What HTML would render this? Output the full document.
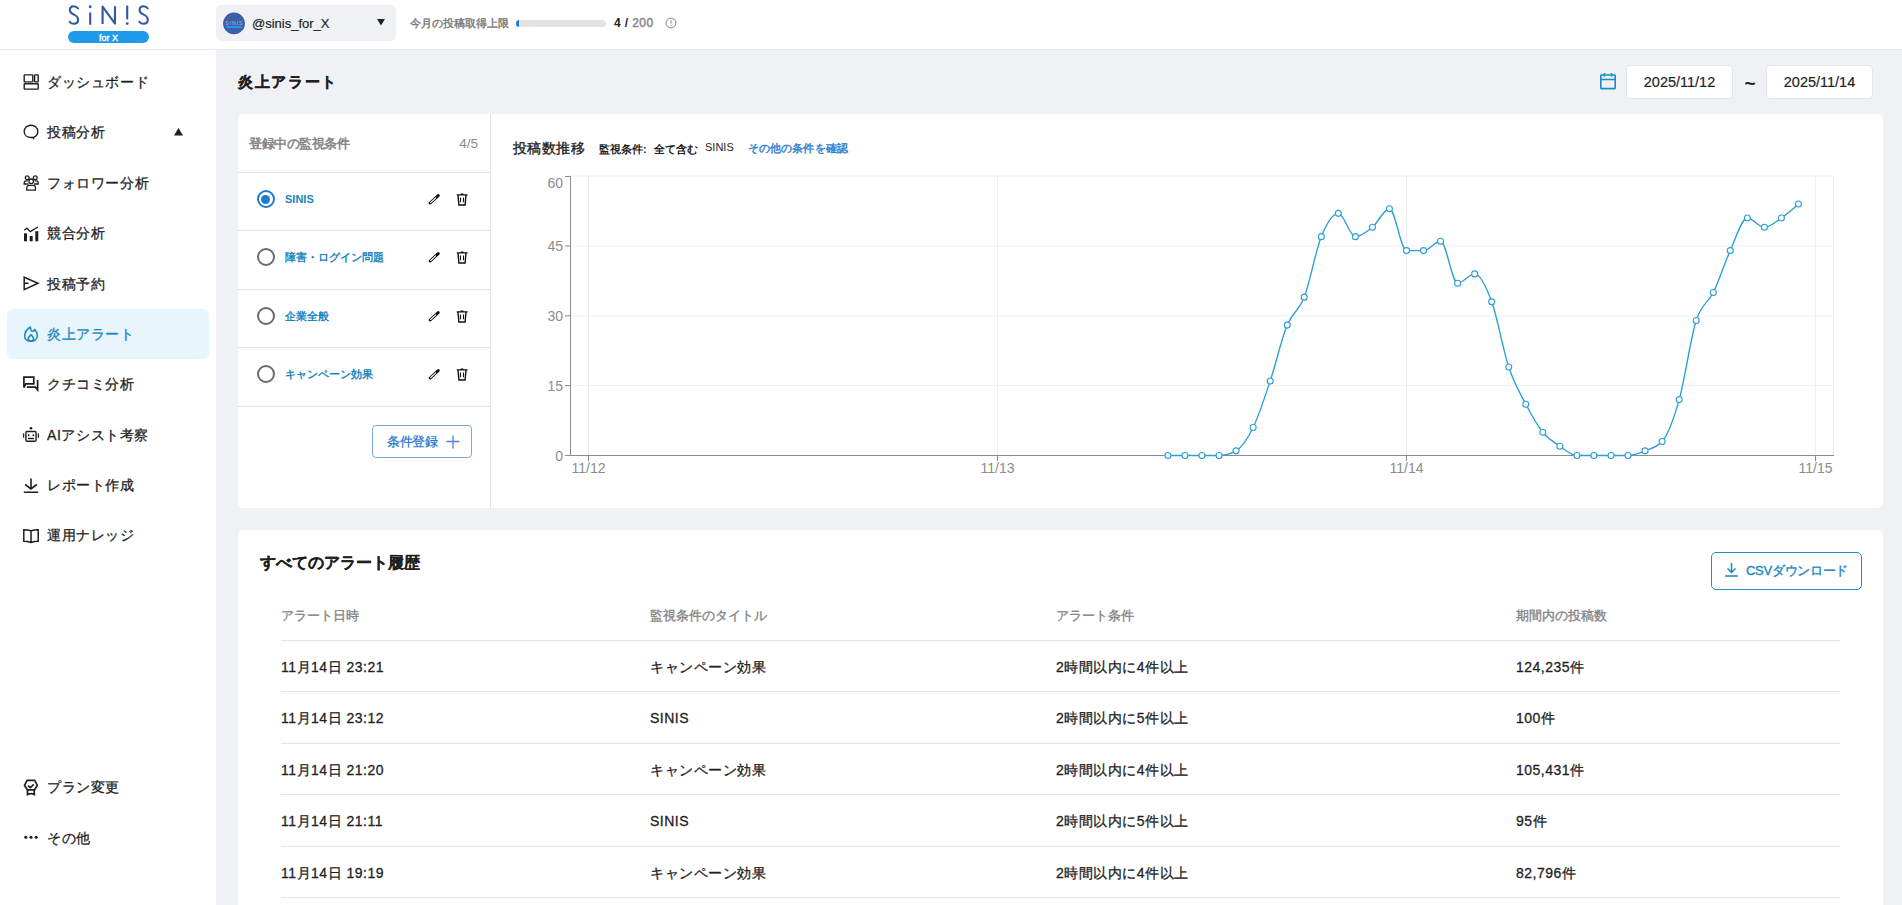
<!DOCTYPE html>
<html lang="ja"><head><meta charset="utf-8">
<style>
*{box-sizing:border-box;margin:0;padding:0}
html,body{width:1902px;height:905px;overflow:hidden}
body{font-family:"Liberation Sans",sans-serif;background:#eff1f5;position:relative;color:#1f1f1f}
.a{position:absolute;white-space:nowrap}
#hdr{left:0;top:0;width:1902px;height:50px;background:#fff;border-bottom:1px solid #e8eaee}
#side{left:0;top:50px;width:216px;height:855px;background:#fff}
.nav{position:absolute;left:7px;width:202px;height:50px;border-radius:6px}
.nav .ic{position:absolute;left:16px;top:17px;width:16px;height:16px;overflow:visible}
.nav .tx{position:absolute;left:40px;top:0;line-height:50px;font-size:14px;letter-spacing:0.6px;color:#1f1f1f;white-space:nowrap;-webkit-text-stroke:0.3px #1f1f1f}
.nav.on{background:#e8f5fc}
.nav.on .tx{color:#1a87c0;-webkit-text-stroke:0.3px #1a87c0}
svg{display:block}
.card{position:absolute;background:#fff;border-radius:5px}
.row{position:absolute;left:0;width:252px;height:58px;border-top:1px solid #e2e4e8}
.med{-webkit-text-stroke:0.3px currentColor}
</style></head><body>
<div id="hdr" class="a">
  <svg class="a" style="left:60px;top:2px" width="100" height="44" viewBox="0 0 100 44">
    <g fill="none" stroke="#2f5aa3" stroke-width="2.1" stroke-linecap="round" stroke-linejoin="round">
      <path id="s1" d="M18,6.4C16.9,4.9 15.4,4.3 13.9,4.3C11.4,4.3 9.9,6 9.9,8.2C9.9,10.6 11.8,11.6 14,12.6C16.6,13.8 18.1,15.2 18.1,17.8C18.1,20.3 16.3,21.8 13.8,21.8C12,21.8 10.7,21.1 9.7,19.8"/>
      <path d="M30.2,11.2V22"/>
      <path d="M42.6,22V4.6L55,21.6V4.3" stroke-linecap="butt"/>
      <path d="M67.2,4.6V16.6"/>
      <path transform="translate(69.7,0)" d="M18,6.4C16.9,4.9 15.4,4.3 13.9,4.3C11.4,4.3 9.9,6 9.9,8.2C9.9,10.6 11.8,11.6 14,12.6C16.6,13.8 18.1,15.2 18.1,17.8C18.1,20.3 16.3,21.8 13.8,21.8C12,21.8 10.7,21.1 9.7,19.8"/>
    </g>
    <circle cx="30.2" cy="4.8" r="1.45" fill="#2f5aa3"/>
    <circle cx="67.2" cy="21.6" r="1.45" fill="#2f5aa3"/>
    <rect x="8" y="29" width="81" height="12" rx="6" fill="#1e9bea"/>
    <text x="48.5" y="38.6" text-anchor="middle" font-family="Liberation Sans" font-size="9" fill="#fff" stroke="#fff" stroke-width="0.35">for X</text>
  </svg>
  <div class="a" style="left:216px;top:5px;width:180px;height:36px;background:#eff1f5;border-radius:5px">
    <svg class="a" style="left:6px;top:7px" width="24" height="24" viewBox="0 0 24 24"><circle cx="12" cy="11.4" r="10.9" fill="#3d5fa8"/><text x="12.4" y="12.6" text-anchor="middle" font-family="Liberation Sans" font-size="5.2" fill="#a9bde6" letter-spacing="0.9">SINIS</text><rect x="4" y="13.9" width="16" height="2" rx="1" fill="#1e9bea"/></svg>
    <div class="a" style="left:36px;top:0;line-height:37px;font-size:13px;color:#1f1f1f;-webkit-text-stroke:0.2px #1f1f1f">@sinis_for_X</div>
    <svg class="a" style="left:161px;top:14px" width="8" height="7" viewBox="0 0 8 7"><path d="M0,0H8L4,6.5Z" fill="#222"/></svg>
  </div>
  <div class="a" style="left:410px;top:0;line-height:47px;font-size:11px;color:#7a7a7a;-webkit-text-stroke:0.4px #7a7a7a">今月の投稿取得上限</div>
  <div class="a" style="left:516px;top:20px;width:90px;height:7px;border-radius:4px;background:#e3e3e3;overflow:hidden"><div style="width:2.5px;height:7px;background:#1f7ad3"></div></div>
  <div class="a" style="left:614px;top:0;line-height:46px;font-size:12px;font-weight:bold;letter-spacing:0.4px;color:#222">4 / <span style="color:#8a8a8a;font-weight:normal;-webkit-text-stroke:0.5px #8a8a8a">200</span></div>
  <svg class="a" style="left:665px;top:17px" width="12" height="12" viewBox="0 0 12 12"><circle cx="6" cy="6" r="4.9" fill="none" stroke="#777" stroke-width="0.9"/><path d="M6,3.3V6.6" stroke="#777" stroke-width="0.9"/><circle cx="6" cy="8.4" r="0.5" fill="#777"/></svg>
</div>

<div id="side" class="a">
<div class="nav" style="top:7px"><svg class="ic" viewBox="0 0 16 16"><g fill="none" stroke="#1f1f1f" stroke-width="1.4"><rect x="1.2" y="0.9" width="8.6" height="7" rx="0.6"/><rect x="11.6" y="0.9" width="3.6" height="7" rx="0.6"/><rect x="1.2" y="9.8" width="14" height="5.3" rx="0.6"/></g></svg><div class="tx">ダッシュボード</div></div>
<div class="nav" style="top:57px"><svg class="ic" viewBox="0 0 16 16"><g fill="none" stroke="#1f1f1f" stroke-width="1.4"><path d="M10,13.2C9,13.4 8.6,13.5 8,13.5C4,13.5 1.2,11 1.2,7.5C1.2,4 4.2,1.3 8,1.3C11.8,1.3 14.8,4 14.8,7.5C14.8,10 13.3,12.2 10.8,13.4L10.3,15.2"/></g></svg><div class="tx">投稿分析</div><svg class="a" style="left:167px;top:21px" width="9" height="8" viewBox="0 0 9 8"><path d="M0,7.5H9L4.5,0Z" fill="#1f1f1f"/></svg></div>
<div class="nav" style="top:108px"><svg class="ic" viewBox="0 0 16 16"><g fill="none" stroke="#1f1f1f" stroke-width="1.3"><circle cx="4.2" cy="2.8" r="1.9"/><circle cx="12.2" cy="2.8" r="1.9"/><circle cx="8.2" cy="6.3" r="2.3"/><path d="M5.5,9H1.2V7.8C1.2,6.5 2,5.8 3.2,5.8H4.8M11,9H15.2V7.8C15.2,6.5 14.4,5.8 13.2,5.8H11.6M3.8,15.2H12.4V12.5C12.4,11.4 11.6,10.4 10.4,10.4H6C4.8,10.4 3.8,11.4 3.8,12.5Z"/></g></svg><div class="tx">フォロワー分析</div></div>
<div class="nav" style="top:158px"><svg class="ic" viewBox="0 0 16 16"><g fill="#1f1f1f"><rect x="1" y="8.3" width="3" height="8"/><rect x="6.7" y="11" width="3" height="5.3"/><rect x="12.3" y="6.2" width="3" height="10.1"/></g><path d="M1.3,5.2L4,3.2L7.3,6.6L15,2" fill="none" stroke="#1f1f1f" stroke-width="1.3"/></svg><div class="tx">競合分析</div></div>
<div class="nav" style="top:209px"><svg class="ic" viewBox="0 0 16 16"><path d="M1.2,1.2L15,7.3L1.2,13.6Z M1.2,7.3H5.5" fill="none" stroke="#1f1f1f" stroke-width="1.5" stroke-linejoin="miter"/></svg><div class="tx">投稿予約</div></div>
<div class="nav on" style="top:259px"><svg class="ic" viewBox="0 0 16 16"><path d="M7.4,1C4.2,3 1.7,6.3 1.7,10C1.7,13.3 4.5,15.3 8,15.3C11.5,15.3 14.3,13.2 14.3,9.8C14.3,7.2 13.2,5 11.6,3.4C11.3,4.6 10.6,5.3 9.6,5.3C8.3,5.3 7.6,4.2 7.4,1Z M8,8.7L5.9,11C5.5,11.5 5.3,12 5.3,12.6C5.3,14 6.5,15 8,15C9.5,15 10.6,14 10.6,12.6C10.6,12 10.4,11.5 10,11Z" fill="none" stroke="#1a87c0" stroke-width="1.6" stroke-linejoin="round"/></svg><div class="tx">炎上アラート</div></div>
<div class="nav" style="top:309px"><svg class="ic" viewBox="0 0 16 16"><g fill="none" stroke="#1f1f1f" stroke-width="1.7"><path d="M0.9,11.5V1.1H10.8V7.8H2.8Z"/><path d="M3.8,11.1H12.4L14.6,13.8V4.1"/></g></svg><div class="tx">クチコミ分析</div></div>
<div class="nav" style="top:360px"><svg class="ic" viewBox="0 0 16 16"><g fill="none" stroke="#1f1f1f" stroke-width="1.4" stroke-linecap="round"><rect x="2.9" y="4.5" width="10.2" height="9.7" rx="1.2"/><path d="M0.6,6.8V10.2M15.4,6.8V10.2" stroke-width="1.3"/><path d="M5.5,11.5H10.5"/></g><g fill="#1f1f1f"><circle cx="8" cy="1.3" r="1.3"/><circle cx="5.6" cy="8.3" r="0.95"/><circle cx="10.4" cy="8.3" r="0.95"/></g></svg><div class="tx">AIアシスト考察</div></div>
<div class="nav" style="top:410px"><svg class="ic" viewBox="0 0 16 16"><g fill="none" stroke="#1f1f1f" stroke-width="1.6"><path d="M8,1.5V12M2.2,7.5L8,12L13.8,7.5M0.8,15.3H15.2"/></g></svg><div class="tx">レポート作成</div></div>
<div class="nav" style="top:460px"><svg class="ic" viewBox="0 0 16 16"><g fill="none" stroke="#1f1f1f" stroke-width="1.5"><path d="M0.8,2.8Q4.5,2.8 8,3.8Q11.5,2.8 15.2,2.8V14.2Q11.5,14.2 8,15.5Q4.5,14.2 0.8,14.2Z M8,3.8V15.5"/></g></svg><div class="tx">運用ナレッジ</div></div>
<div class="nav" style="top:712px"><svg class="ic" viewBox="0 0 16 16"><g fill="none" stroke="#1f1f1f" stroke-width="1.7"><path d="M4.1,1.3H11.7L14.3,6.4L11.5,10.8H4.4L1.5,6.4Z"/><path d="M4.5,10.8V15.6Q8,13.8 11.3,15.6V10.8"/><path d="M5,6.6L7.3,8.7L10.8,5.3"/></g></svg><div class="tx">プラン変更</div></div>
<div class="nav" style="top:763px"><svg class="ic" viewBox="0 0 16 16"><g fill="#1f1f1f"><circle cx="2.8" cy="7.2" r="1.55"/><circle cx="8" cy="7.2" r="1.55"/><circle cx="13.2" cy="7.2" r="1.55"/></g></svg><div class="tx">その他</div></div>

</div>

<div class="a" style="left:238px;top:0;line-height:164px;font-size:15px;font-weight:bold;letter-spacing:1.7px;color:#1f1f1f;-webkit-text-stroke:0.3px #1f1f1f">炎上アラート</div>
<svg class="a" style="left:1599px;top:72px" width="18" height="18" viewBox="0 0 18 18"><g fill="none" stroke="#1a8fc9" stroke-width="1.6"><rect x="1.8" y="3" width="14.4" height="13.6" rx="0.5"/><path d="M1.8,7.5H16.2M5.5,1V4.5M12.5,1V4.5"/></g></svg>
<div class="a" style="left:1626px;top:65px;width:107px;height:34px;background:#fff;border:1px solid #e3e5e9;border-radius:4px;text-align:center;line-height:32.5px;font-size:14.5px;color:#1f1f1f;-webkit-text-stroke:0.2px #1f1f1f">2025/11/12</div>
<div class="a" style="left:1742px;top:68px;width:16px;line-height:32px;font-size:19px;font-weight:bold;text-align:center;color:#1f1f1f">~</div>
<div class="a" style="left:1766px;top:65px;width:107px;height:34px;background:#fff;border:1px solid #e3e5e9;border-radius:4px;text-align:center;line-height:32.5px;font-size:14.5px;color:#1f1f1f;-webkit-text-stroke:0.2px #1f1f1f">2025/11/14</div>

<div class="card" style="left:238px;top:114px;width:1645px;height:394px">
  <div class="a" style="left:252px;top:0;width:1px;height:394px;background:#e2e4e8"></div>
  <div class="a" style="left:11px;top:0;line-height:60px;font-size:13px;letter-spacing:-0.45px;color:#858585;-webkit-text-stroke:0.55px #858585">登録中の監視条件</div>
  <div class="a" style="right:1405px;top:0;line-height:59px;font-size:13.5px;color:#8a8a8a">4/5</div>
  <div class="row" style="top:58.0px"><div class="a" style="left:18.5px;top:17px;width:18px;height:18px;border-radius:50%;border:2px solid #1f78d1"><div class="a" style="left:2.5px;top:2.5px;width:9px;height:9px;border-radius:50%;background:#1f78d1"></div></div><div class="a" style="left:47px;top:0;line-height:53px;font-size:11px;font-weight:bold;color:#1a87c0">SINIS</div><svg class="a" style="left:189px;top:18px" width="14" height="14" viewBox="0 0 14 14"><path d="M3.2,12L11.2,4.6" stroke="#111" stroke-width="3" stroke-linecap="round"/><path d="M3.7,11.5L8.7,6.9" stroke="#fff" stroke-width="1.1" stroke-linecap="round"/></svg><svg class="a" style="left:217px;top:19px" width="14" height="14" viewBox="0 0 14 14"><g fill="none" stroke="#111" stroke-width="1.4"><path d="M1.8,2.9H12.6M5.6,2.1H8.4M3,3.1L3.9,13H10.1L11,3.1"/><path d="M5.5,5.5V10.3M8.5,5.5V10.3" stroke-width="1.1"/></g></svg></div><div class="row" style="top:116.0px"><div class="a" style="left:18.5px;top:17px;width:18px;height:18px;border-radius:50%;border:2px solid #6b6b6b"></div><div class="a" style="left:47px;top:0;line-height:53px;font-size:11px;font-weight:bold;color:#1a87c0">障害・ログイン問題</div><svg class="a" style="left:189px;top:18px" width="14" height="14" viewBox="0 0 14 14"><path d="M3.2,12L11.2,4.6" stroke="#111" stroke-width="3" stroke-linecap="round"/><path d="M3.7,11.5L8.7,6.9" stroke="#fff" stroke-width="1.1" stroke-linecap="round"/></svg><svg class="a" style="left:217px;top:19px" width="14" height="14" viewBox="0 0 14 14"><g fill="none" stroke="#111" stroke-width="1.4"><path d="M1.8,2.9H12.6M5.6,2.1H8.4M3,3.1L3.9,13H10.1L11,3.1"/><path d="M5.5,5.5V10.3M8.5,5.5V10.3" stroke-width="1.1"/></g></svg></div><div class="row" style="top:175.0px"><div class="a" style="left:18.5px;top:17px;width:18px;height:18px;border-radius:50%;border:2px solid #6b6b6b"></div><div class="a" style="left:47px;top:0;line-height:53px;font-size:11px;font-weight:bold;color:#1a87c0">企業全般</div><svg class="a" style="left:189px;top:18px" width="14" height="14" viewBox="0 0 14 14"><path d="M3.2,12L11.2,4.6" stroke="#111" stroke-width="3" stroke-linecap="round"/><path d="M3.7,11.5L8.7,6.9" stroke="#fff" stroke-width="1.1" stroke-linecap="round"/></svg><svg class="a" style="left:217px;top:19px" width="14" height="14" viewBox="0 0 14 14"><g fill="none" stroke="#111" stroke-width="1.4"><path d="M1.8,2.9H12.6M5.6,2.1H8.4M3,3.1L3.9,13H10.1L11,3.1"/><path d="M5.5,5.5V10.3M8.5,5.5V10.3" stroke-width="1.1"/></g></svg></div><div class="row" style="top:233.0px"><div class="a" style="left:18.5px;top:17px;width:18px;height:18px;border-radius:50%;border:2px solid #6b6b6b"></div><div class="a" style="left:47px;top:0;line-height:53px;font-size:11px;font-weight:bold;color:#1a87c0">キャンペーン効果</div><svg class="a" style="left:189px;top:18px" width="14" height="14" viewBox="0 0 14 14"><path d="M3.2,12L11.2,4.6" stroke="#111" stroke-width="3" stroke-linecap="round"/><path d="M3.7,11.5L8.7,6.9" stroke="#fff" stroke-width="1.1" stroke-linecap="round"/></svg><svg class="a" style="left:217px;top:19px" width="14" height="14" viewBox="0 0 14 14"><g fill="none" stroke="#111" stroke-width="1.4"><path d="M1.8,2.9H12.6M5.6,2.1H8.4M3,3.1L3.9,13H10.1L11,3.1"/><path d="M5.5,5.5V10.3M8.5,5.5V10.3" stroke-width="1.1"/></g></svg></div><div class="row" style="top:292px"></div>
  <div class="a" style="left:134px;top:311px;width:100px;height:33px;border:1px solid #74aaea;border-radius:4px;color:#2f78d2;font-size:13px;letter-spacing:-0.5px;line-height:32px;padding-left:14px;-webkit-text-stroke:0.3px #2f78d2">条件登録<svg class="a" style="left:73px;top:9px" width="14" height="14" viewBox="0 0 14 14"><path d="M7,0.5V13.5M0.5,6.5H13.5" stroke="#4f83d4" stroke-width="1.3"/></svg></div>

  <div class="a" style="left:275px;top:0;line-height:68px;font-size:14px;letter-spacing:0.4px;color:#1f1f1f;-webkit-text-stroke:0.35px #1f1f1f">投稿数推移</div>
  <div class="a" style="left:361px;top:0;line-height:71px;font-size:11px;font-weight:bold;color:#1f1f1f">監視条件:</div>
  <div class="a" style="left:416px;top:0;line-height:71px;font-size:11px;font-weight:bold;color:#1f1f1f">全て含む</div>
  <div class="a" style="left:467px;top:0;line-height:66px;font-size:11px;color:#1f1f1f">SINIS</div>
  <div class="a" style="left:510px;top:0;line-height:69px;font-size:11px;letter-spacing:0.1px;color:#2f7fd0;-webkit-text-stroke:0.45px #2f7fd0">その他の条件を確認</div>
</div>

<svg class="a" style="left:0;top:0" width="1902" height="905" viewBox="0 0 1902 905">
  <g stroke-width="1">
    <path stroke="#eef1f2" d="M570,176.1H1834M570,246H1834M570,315.8H1834M570,385.6H1834"/>
    <path stroke="#eceff1" d="M588.5,176V455M997.5,176V455M1406.5,176V455M1815.5,176V455M1833.5,176V455"/>
  </g>
  <g stroke="#8c8c8c" stroke-width="1">
    <path d="M570.5,176V456M565,176.5H570.5M565,246H570.5M565,315.8H570.5M565,385.6H570.5M565,455.5H570.5"/>
    <path d="M570,455.5H1834M588.5,455.5V461M997.5,455.5V461M1406.5,455.5V461M1815.5,455.5V461"/>
  </g>
  <g font-family="Liberation Sans" font-size="14" fill="#8c8c8c" text-anchor="end">
    <text x="563" y="188">60</text><text x="563" y="251">45</text><text x="563" y="321">30</text><text x="563" y="391">15</text><text x="563" y="461">0</text>
  </g>
  <g font-family="Liberation Sans" font-size="14" fill="#8c8c8c" text-anchor="middle">
    <text x="588.5" y="473">11/12</text><text x="997.5" y="473">11/13</text><text x="1406.5" y="473">11/14</text><text x="1815.5" y="473">11/15</text>
  </g>
  <path d="M1167.92,455.50C1173.60,455.50,1179.28,455.50,1184.96,455.50C1190.64,455.50,1196.32,455.50,1202.00,455.50C1207.68,455.50,1213.36,455.50,1219.04,455.50C1224.72,455.50,1230.40,453.95,1236.08,450.84C1241.76,447.74,1247.44,439.20,1253.12,427.56C1258.81,415.92,1264.49,398.07,1270.17,380.99C1275.85,363.92,1281.53,339.08,1287.21,325.11C1292.89,311.14,1298.57,311.92,1304.25,297.17C1309.93,282.43,1315.61,250.61,1321.29,236.64C1326.97,222.67,1332.65,213.35,1338.33,213.35C1344.01,213.35,1349.69,236.64,1355.38,236.64C1361.06,236.64,1366.74,231.98,1372.42,227.32C1378.10,222.67,1383.78,208.70,1389.46,208.70C1395.14,208.70,1400.82,250.61,1406.50,250.61C1412.18,250.61,1417.86,250.61,1423.54,250.61C1429.22,250.61,1434.90,241.29,1440.58,241.29C1446.26,241.29,1451.94,283.20,1457.62,283.20C1463.31,283.20,1468.99,273.89,1474.67,273.89C1480.35,273.89,1486.03,286.31,1491.71,301.83C1497.39,317.35,1503.07,349.95,1508.75,367.02C1514.43,384.10,1520.11,393.41,1525.79,404.28C1531.47,415.14,1537.15,425.23,1542.83,432.22C1548.51,439.20,1554.19,442.31,1559.88,446.19C1565.56,450.07,1571.24,455.50,1576.92,455.50C1582.60,455.50,1588.28,455.50,1593.96,455.50C1599.64,455.50,1605.32,455.50,1611.00,455.50C1616.68,455.50,1622.36,455.50,1628.04,455.50C1633.72,455.50,1639.40,453.17,1645.08,450.84C1650.76,448.52,1656.44,447.74,1662.12,441.53C1667.81,435.32,1673.49,419.80,1679.17,399.62C1684.85,379.44,1690.53,338.31,1696.21,320.46C1701.89,302.61,1707.57,304.16,1713.25,292.52C1718.93,280.87,1724.61,263.02,1730.29,250.61C1735.97,238.19,1741.65,218.01,1747.33,218.01C1753.01,218.01,1758.69,227.32,1764.38,227.32C1770.06,227.32,1775.74,221.89,1781.42,218.01C1787.10,214.13,1792.78,209.08,1798.46,204.04" fill="none" stroke="#2a9fd4" stroke-width="1.35"/>
  <g fill="#fff" stroke="#2a9fd4" stroke-width="1.1"><circle cx="1167.92" cy="455.50" r="3"/><circle cx="1184.96" cy="455.50" r="3"/><circle cx="1202.00" cy="455.50" r="3"/><circle cx="1219.04" cy="455.50" r="3"/><circle cx="1236.08" cy="450.84" r="3"/><circle cx="1253.12" cy="427.56" r="3"/><circle cx="1270.17" cy="380.99" r="3"/><circle cx="1287.21" cy="325.11" r="3"/><circle cx="1304.25" cy="297.17" r="3"/><circle cx="1321.29" cy="236.64" r="3"/><circle cx="1338.33" cy="213.35" r="3"/><circle cx="1355.38" cy="236.64" r="3"/><circle cx="1372.42" cy="227.32" r="3"/><circle cx="1389.46" cy="208.70" r="3"/><circle cx="1406.50" cy="250.61" r="3"/><circle cx="1423.54" cy="250.61" r="3"/><circle cx="1440.58" cy="241.29" r="3"/><circle cx="1457.62" cy="283.20" r="3"/><circle cx="1474.67" cy="273.89" r="3"/><circle cx="1491.71" cy="301.83" r="3"/><circle cx="1508.75" cy="367.02" r="3"/><circle cx="1525.79" cy="404.28" r="3"/><circle cx="1542.83" cy="432.22" r="3"/><circle cx="1559.88" cy="446.19" r="3"/><circle cx="1576.92" cy="455.50" r="3"/><circle cx="1593.96" cy="455.50" r="3"/><circle cx="1611.00" cy="455.50" r="3"/><circle cx="1628.04" cy="455.50" r="3"/><circle cx="1645.08" cy="450.84" r="3"/><circle cx="1662.12" cy="441.53" r="3"/><circle cx="1679.17" cy="399.62" r="3"/><circle cx="1696.21" cy="320.46" r="3"/><circle cx="1713.25" cy="292.52" r="3"/><circle cx="1730.29" cy="250.61" r="3"/><circle cx="1747.33" cy="218.01" r="3"/><circle cx="1764.38" cy="227.32" r="3"/><circle cx="1781.42" cy="218.01" r="3"/><circle cx="1798.46" cy="204.04" r="3"/></g>
</svg>

<div class="card" style="left:238px;top:530px;width:1645px;height:400px">
  <div class="a" style="left:22px;top:0;line-height:66px;font-size:16px;font-weight:bold;color:#1f1f1f;-webkit-text-stroke:0.2px #1f1f1f">すべてのアラート履歴</div>
  <div class="a" style="left:1473px;top:22px;width:151px;height:38px;border:1.5px solid #1a8fc9;border-radius:5px;color:#1a87c0;font-size:13px;letter-spacing:-0.3px;line-height:35px;padding-left:34px;-webkit-text-stroke:0.35px #1a87c0">CSVダウンロード
    <svg class="a" style="left:12px;top:9px" width="15" height="15" viewBox="0 0 15 15"><g fill="none" stroke="#1a87c0" stroke-width="1.5"><path d="M7.5,1V10M3.5,6.5L7.5,10.5L11.5,6.5M1,14H14"/></g></svg>
  </div>
  <div class="a" style="left:43px;top:110px;width:1559px;height:1px;background:#e2e4e8"></div><div class="a" style="left:43px;top:73px;line-height:26px;font-size:13px;color:#858585;-webkit-text-stroke:0.35px #858585">アラート日時</div><div class="a" style="left:412px;top:73px;line-height:26px;font-size:13px;color:#858585;-webkit-text-stroke:0.35px #858585">監視条件のタイトル</div><div class="a" style="left:818px;top:73px;line-height:26px;font-size:13px;color:#858585;-webkit-text-stroke:0.35px #858585">アラート条件</div><div class="a" style="left:1278px;top:73px;line-height:26px;font-size:13px;color:#858585;-webkit-text-stroke:0.35px #858585">期間内の投稿数</div><div class="a" style="left:43px;top:110.5px;width:1559px;height:51.5px;border-bottom:1px solid #e2e4e8"></div><div class="a" style="left:43px;top:110.5px;line-height:52px;font-size:14px;letter-spacing:0.5px;color:#1f1f1f;-webkit-text-stroke:0.3px #1f1f1f">11月14日 23:21</div><div class="a" style="left:412px;top:110.5px;line-height:52px;font-size:14px;letter-spacing:0.5px;color:#1f1f1f;-webkit-text-stroke:0.3px #1f1f1f">キャンペーン効果</div><div class="a" style="left:818px;top:110.5px;line-height:52px;font-size:14px;letter-spacing:0.5px;color:#1f1f1f;-webkit-text-stroke:0.3px #1f1f1f">2時間以内に4件以上</div><div class="a" style="left:1278px;top:110.5px;line-height:52px;font-size:14px;letter-spacing:0.5px;color:#1f1f1f;-webkit-text-stroke:0.3px #1f1f1f">124,235件</div><div class="a" style="left:43px;top:162.0px;width:1559px;height:51.5px;border-bottom:1px solid #e2e4e8"></div><div class="a" style="left:43px;top:162.0px;line-height:52px;font-size:14px;letter-spacing:0.5px;color:#1f1f1f;-webkit-text-stroke:0.3px #1f1f1f">11月14日 23:12</div><div class="a" style="left:412px;top:162.0px;line-height:52px;font-size:14px;letter-spacing:0.5px;color:#1f1f1f;-webkit-text-stroke:0.3px #1f1f1f">SINIS</div><div class="a" style="left:818px;top:162.0px;line-height:52px;font-size:14px;letter-spacing:0.5px;color:#1f1f1f;-webkit-text-stroke:0.3px #1f1f1f">2時間以内に5件以上</div><div class="a" style="left:1278px;top:162.0px;line-height:52px;font-size:14px;letter-spacing:0.5px;color:#1f1f1f;-webkit-text-stroke:0.3px #1f1f1f">100件</div><div class="a" style="left:43px;top:213.5px;width:1559px;height:51.5px;border-bottom:1px solid #e2e4e8"></div><div class="a" style="left:43px;top:213.5px;line-height:52px;font-size:14px;letter-spacing:0.5px;color:#1f1f1f;-webkit-text-stroke:0.3px #1f1f1f">11月14日 21:20</div><div class="a" style="left:412px;top:213.5px;line-height:52px;font-size:14px;letter-spacing:0.5px;color:#1f1f1f;-webkit-text-stroke:0.3px #1f1f1f">キャンペーン効果</div><div class="a" style="left:818px;top:213.5px;line-height:52px;font-size:14px;letter-spacing:0.5px;color:#1f1f1f;-webkit-text-stroke:0.3px #1f1f1f">2時間以内に4件以上</div><div class="a" style="left:1278px;top:213.5px;line-height:52px;font-size:14px;letter-spacing:0.5px;color:#1f1f1f;-webkit-text-stroke:0.3px #1f1f1f">105,431件</div><div class="a" style="left:43px;top:265.0px;width:1559px;height:51.5px;border-bottom:1px solid #e2e4e8"></div><div class="a" style="left:43px;top:265.0px;line-height:52px;font-size:14px;letter-spacing:0.5px;color:#1f1f1f;-webkit-text-stroke:0.3px #1f1f1f">11月14日 21:11</div><div class="a" style="left:412px;top:265.0px;line-height:52px;font-size:14px;letter-spacing:0.5px;color:#1f1f1f;-webkit-text-stroke:0.3px #1f1f1f">SINIS</div><div class="a" style="left:818px;top:265.0px;line-height:52px;font-size:14px;letter-spacing:0.5px;color:#1f1f1f;-webkit-text-stroke:0.3px #1f1f1f">2時間以内に5件以上</div><div class="a" style="left:1278px;top:265.0px;line-height:52px;font-size:14px;letter-spacing:0.5px;color:#1f1f1f;-webkit-text-stroke:0.3px #1f1f1f">95件</div><div class="a" style="left:43px;top:316.5px;width:1559px;height:51.5px;border-bottom:1px solid #e2e4e8"></div><div class="a" style="left:43px;top:316.5px;line-height:52px;font-size:14px;letter-spacing:0.5px;color:#1f1f1f;-webkit-text-stroke:0.3px #1f1f1f">11月14日 19:19</div><div class="a" style="left:412px;top:316.5px;line-height:52px;font-size:14px;letter-spacing:0.5px;color:#1f1f1f;-webkit-text-stroke:0.3px #1f1f1f">キャンペーン効果</div><div class="a" style="left:818px;top:316.5px;line-height:52px;font-size:14px;letter-spacing:0.5px;color:#1f1f1f;-webkit-text-stroke:0.3px #1f1f1f">2時間以内に4件以上</div><div class="a" style="left:1278px;top:316.5px;line-height:52px;font-size:14px;letter-spacing:0.5px;color:#1f1f1f;-webkit-text-stroke:0.3px #1f1f1f">82,796件</div>
</div>
</body></html>
